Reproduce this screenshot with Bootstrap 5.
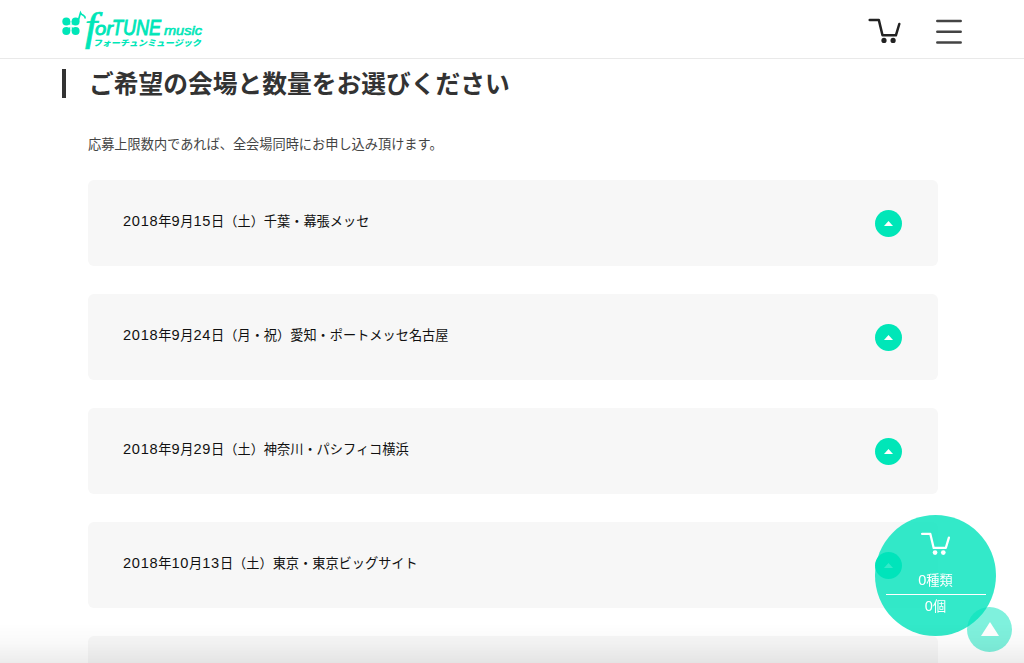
<!DOCTYPE html>
<html lang="ja">
<head>
<meta charset="utf-8">
<meta name="viewport" content="width=device-width, initial-scale=1">
<title>forTUNE music</title>
<link href="https://cdn.jsdelivr.net/npm/bootstrap@5.3.0/dist/css/bootstrap.min.css" rel="stylesheet">
<style>
html, body { height: 100%; overflow: hidden; }
body { font-family: "Liberation Sans", "Noto Sans CJK JP", sans-serif; color: #333; background: #fff; }
.site-head { height: 59px; border-bottom: 1px solid #e9e9e9; padding: 0 62px 0 60px; }
.brand-art { width: 146px; height: 42px; margin-top: 1px; overflow: visible; }
.main-area { height: 604px; overflow: hidden; padding: 10px 86px 0 62px; }
.page-title { font-family: "Noto Sans CJK JP", sans-serif; font-size: 24.75px; font-weight: 700; line-height: 27px; border-left: 4px solid #333; padding-left: 23px; height: 29px; }
.lead-text { font-family: "Noto Sans CJK JP", sans-serif; font-size: 13.2px; line-height: 20px; margin: 36px 0 26px 26px; color: #444; }
.venues { margin-left: 26px; gap: 28px; }
.venue { height: 86px; flex: none; background: #f7f7f7; border-radius: 6px; padding: 0 36px 0 35px; font-size: 13.2px; color: #111; }
.venue p { font-family: "Noto Sans CJK JP", sans-serif; line-height: 20px; position: relative; top: -2px; }
.venue b { font: 400 14.6px/1 "Liberation Sans", sans-serif; letter-spacing: .7px; }
.toggle { width: 27px; height: 27px; background: #00e6b8; border: 0; }
.cart-float { width: 121px; height: 121px; left: 875px; top: 515px; background: rgba(0,228,187,.8); color: #fff; font-size: 13.2px; z-index: 3; font-family: "Noto Sans CJK JP", sans-serif; }
.cart-float b { font: 400 14.5px/1 "Liberation Sans", sans-serif; }
.cart-float hr { width: 100px; border-top: 1px solid #fff; opacity: 1; }
.to-top { width: 45px; height: 45px; left: 967px; top: 607px; background: rgba(0,228,187,.5); z-index: 2; border: 0; }
.fade-bottom { height: 40px; background: linear-gradient(rgba(0,0,0,0), rgba(0,0,0,.025) 50%, rgba(0,0,0,.075)); z-index: 4; pointer-events: none; }
</style>
</head>
<body>
<svg width="0" height="0" class="position-absolute" aria-hidden="true">
  <symbol id="cart" viewBox="0 0 32 26">
    <path d="M1.2 1.9H10.3L14 17.3H27.4L30.8 6" fill="none" stroke="currentColor" stroke-width="2.5" stroke-linecap="round" stroke-linejoin="round"/>
    <circle cx="15.5" cy="22.4" r="2.6" fill="currentColor"/><circle cx="24.6" cy="22.4" r="2.6" fill="currentColor"/>
  </symbol>
</svg>
<header class="site-head d-flex align-items-center justify-content-between">
  <a href="#" class="d-block lh-1" aria-label="forTUNE music">
    <svg class="brand-art" viewBox="0 0 146 42" fill="#00e6b8">
      <g>
        <circle cx="6.3" cy="12.4" r="4"/><circle cx="15.6" cy="12.4" r="4"/><circle cx="6.3" cy="22" r="4"/><circle cx="15.6" cy="22" r="4"/>
        <path d="M6 12h4.2v4.3zM16 12h-4.2v4.3zM6 22h4.2v-4.3zM16 22h-4.2v-4.3z"/>
        <path d="M18.3 11.5 20.5 3.8C22 7 25.5 6 25.2 9.5" fill="none" stroke="#00e6b8" stroke-width="1.7"/>
      </g>
      <text transform="translate(14 30.8) scale(1.1 1)" font-family="Liberation Serif" font-style="italic" font-size="40" stroke="#00e6b8" stroke-width=".7">&#160;f&#160;</text>
      <g font-family="Liberation Sans" font-style="italic" stroke="#00e6b8">
        <text x="35" y="26" font-size="19" stroke-width=".9" textLength="18" lengthAdjust="spacingAndGlyphs">or</text>
        <text x="52" y="26" font-size="22.5" stroke-width="1" textLength="49" lengthAdjust="spacingAndGlyphs">TUNE</text>
        <text x="104" y="26" font-size="13" stroke-width=".6" textLength="38" lengthAdjust="spacingAndGlyphs">music</text>
      </g>
      <text transform="translate(33 37.4) skewX(-12)" font-family="Noto Sans CJK JP" font-weight="900" font-size="8.5" textLength="108" lengthAdjust="spacingAndGlyphs">フォーチュンミュージック</text>
    </svg>
  </a>
  <nav class="d-flex align-items-center">
    <a href="#" class="d-block lh-1" style="color:#222;margin-top:4px" aria-label="カート"><svg width="33" height="26"><use href="#cart"/></svg></a>
    <a href="#" class="d-block lh-1" style="margin:5px 0 0 35px" aria-label="メニュー"><svg width="26" height="26" stroke="#444" stroke-width="2.5" stroke-linecap="round"><path d="M1.3 2H24.7M1.3 12.8H24.7M1.3 23.5H24.7"/></svg></a>
  </nav>
</header>
<main class="main-area">
  <h1 class="page-title mb-0">ご希望の会場と数量をお選びください</h1>
  <p class="lead-text">応募上限数内であれば、全会場同時にお申し込み頂けます。</p>
  <div class="venues d-flex flex-column">
    <section class="venue d-flex align-items-center justify-content-between"><p class="mb-0"><b>2018</b>年<b>9</b>月<b>15</b>日（土）千葉・幕張メッセ</p><button class="toggle rounded-circle p-0 d-flex align-items-center justify-content-center" aria-label="開く"><svg width="9" height="5"><path d="M0 5 4.5 0 9 5z" fill="#fff"/></svg></button></section>
    <section class="venue d-flex align-items-center justify-content-between"><p class="mb-0"><b>2018</b>年<b>9</b>月<b>24</b>日（月・祝）愛知・ポートメッセ名古屋</p><button class="toggle rounded-circle p-0 d-flex align-items-center justify-content-center" aria-label="開く"><svg width="9" height="5"><path d="M0 5 4.5 0 9 5z" fill="#fff"/></svg></button></section>
    <section class="venue d-flex align-items-center justify-content-between"><p class="mb-0"><b>2018</b>年<b>9</b>月<b>29</b>日（土）神奈川・パシフィコ横浜</p><button class="toggle rounded-circle p-0 d-flex align-items-center justify-content-center" aria-label="開く"><svg width="9" height="5"><path d="M0 5 4.5 0 9 5z" fill="#fff"/></svg></button></section>
    <section class="venue d-flex align-items-center justify-content-between"><p class="mb-0"><b>2018</b>年<b>10</b>月<b>13</b>日（土）東京・東京ビッグサイト</p><button class="toggle rounded-circle p-0 d-flex align-items-center justify-content-center" aria-label="開く"><svg width="9" height="5"><path d="M0 5 4.5 0 9 5z" fill="#fff"/></svg></button></section>
    <section class="venue"></section>
  </div>
</main>
<a href="#" class="cart-float position-fixed rounded-circle d-flex flex-column align-items-center text-decoration-none">
  <svg width="29" height="24" style="margin-top:17px"><use href="#cart"/></svg>
  <span class="lh-1" style="margin-top:17px"><b>0</b>種類</span>
  <hr style="margin:6px 0 4px">
  <span class="lh-1"><b>0</b>個</span>
</a>
<button class="to-top position-fixed rounded-circle p-0 d-flex align-items-center justify-content-center" aria-label="ページトップへ"><svg width="18" height="14" style="margin-top:-2px"><path d="M0 14 9 0 18 14z" fill="#fff"/></svg></button>
<div class="fade-bottom position-fixed bottom-0 start-0 end-0"></div>
<script src="https://cdn.jsdelivr.net/npm/bootstrap@5.3.0/dist/js/bootstrap.bundle.min.js"></script>
</body>
</html>
